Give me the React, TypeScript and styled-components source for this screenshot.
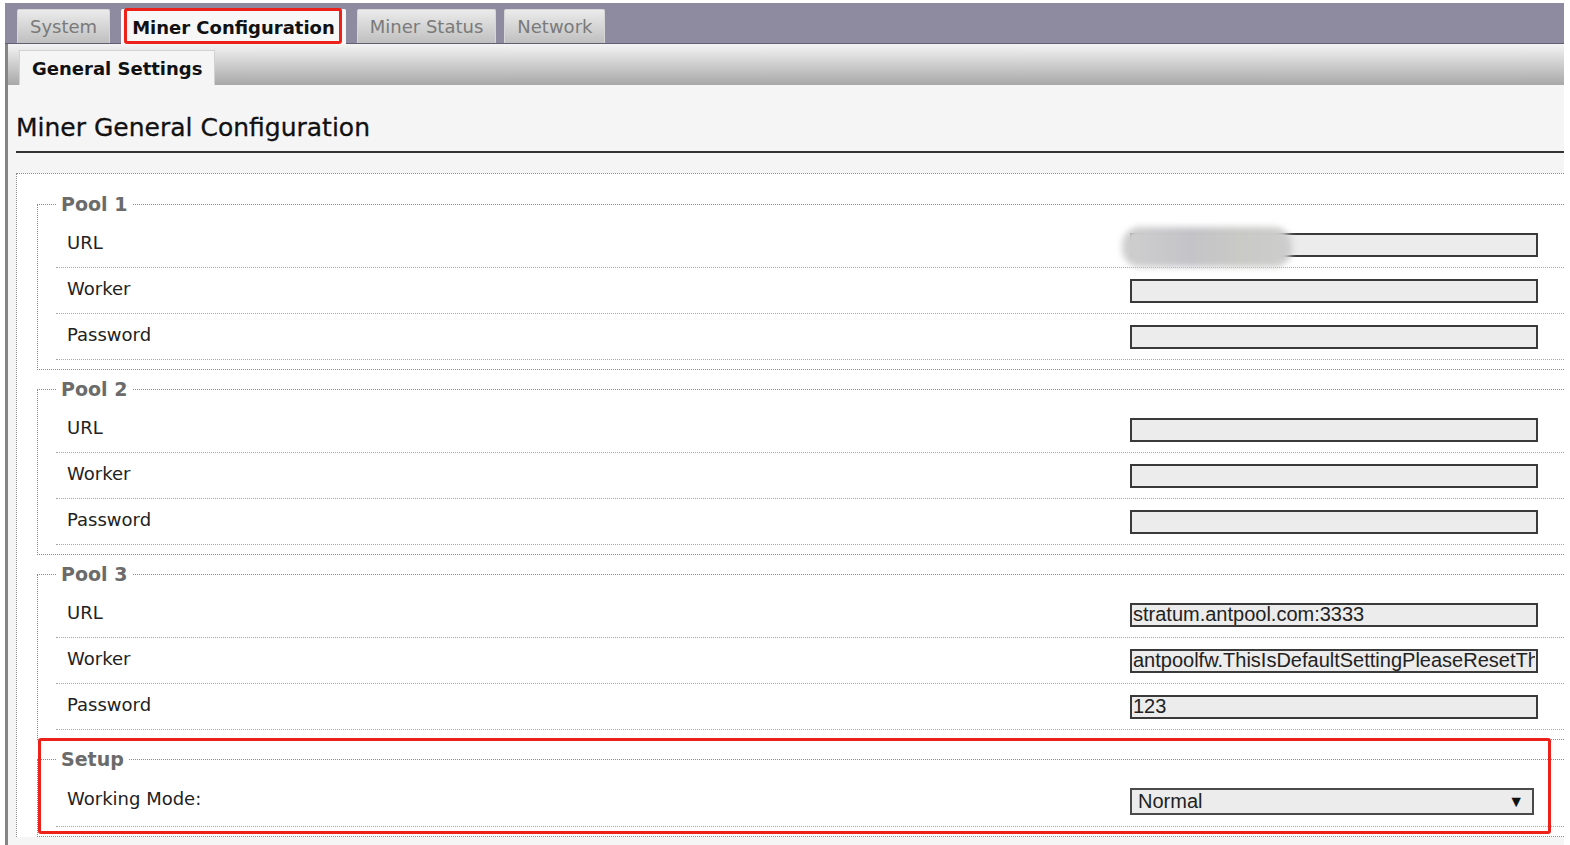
import React from "react";
import styled, { createGlobalStyle } from "styled-components";

const GlobalStyle = createGlobalStyle`
  html, body {
    margin: 0;
    padding: 0;
    background: #ffffff;
  }
  body {
    font-family: "DejaVu Sans", Verdana, sans-serif;
  }
`;

const Page = styled.div`
  width: 1559px;
  height: 842px;
  margin: 3px 0 0 5px;
  display: flex;
  flex-direction: column;
  overflow: hidden;
`;

const TopNav = styled.div`
  display: flex;
  align-items: flex-end;
  height: 41px;
  padding-left: 12px;
  background: #8e8a9f;
  box-shadow: inset 0 -1px 0 #625d72;
`;

const NavTab = styled.div<{ $active?: boolean }>`
  position: relative;
  display: flex;
  align-items: center;
  height: ${(p) => (p.$active ? "34px" : "33px")};
  margin: ${(p) => (p.$active ? "0 11px 0 3px" : "0 8px 1px 0")};
  padding: 0 ${(p) => (p.$active ? "10px" : "12px")};
  border: 1px solid ${(p) => (p.$active ? "#f6f6f6" : "#d6d6d6")};
  border-bottom: none;
  border-radius: 2px 2px 0 0;
  background: ${(p) =>
    p.$active ? "#f7f7f7" : "linear-gradient(#ebebeb, #bfbfbf)"};
  color: ${(p) => (p.$active ? "#111111" : "#7a7a7a")};
  font-size: 18px;
  font-weight: ${(p) => (p.$active ? "bold" : "normal")};
  white-space: nowrap;

  ${(p) =>
    p.$active &&
    `
    &::after {
      content: "";
      position: absolute;
      top: -2px;
      left: 2px;
      right: 3px;
      bottom: 0;
      border: 3px solid #ec2119;
      border-radius: 3px;
    }
  `}
`;

const Body = styled.div`
  flex: 1;
  display: flex;
  flex-direction: column;
  border-left: 3px solid #858585;
`;

const SubNav = styled.div`
  display: flex;
  align-items: flex-end;
  height: 41px;
  padding-left: 11px;
  background: linear-gradient(#f4f4f4, #a8a8a8);
`;

const SubTab = styled.div`
  display: flex;
  align-items: center;
  height: 34px;
  padding: 0 12px;
  border: 1px solid #d2d2d2;
  border-bottom: none;
  background: #f5f5f5;
  color: #111111;
  font-size: 18px;
  font-weight: bold;
`;

const Panel = styled.div`
  flex: 1;
  padding-left: 8px;
  background: #f5f5f5;
`;

const Title = styled.h2`
  margin: 28px 0 0;
  padding-bottom: 8px;
  border-bottom: 2px solid #333333;
  font-size: 25px;
  line-height: 30px;
  font-weight: normal;
  color: #111111;
  -webkit-text-stroke: 0.3px #111111;
`;

const ConfigBox = styled.div`
  margin-top: 20px;
  padding: 19px 0 0 20px;
  border: 1px dotted #8a8a8a;
  border-right: none;
  border-bottom: none;
  background: #ffffff;
`;

const Group = styled.fieldset`
  margin: 0 0 8px;
  padding: 7px 0 9px 18px;
  border: 1px dotted #8a8a8a;
  border-right: none;
  min-width: 0;
`;

const GroupTitle = styled.legend`
  padding: 0 5px;
  font-size: 19px;
  line-height: 22px;
  font-weight: bold;
  color: #6b6b6b;
`;

const Highlight = styled.div`
  position: relative;

  &::after {
    content: "";
    position: absolute;
    top: -10px;
    left: 1px;
    right: 13px;
    bottom: 3px;
    border: 3px solid #ec2119;
    border-radius: 3px;
    pointer-events: none;
  }
`;

const Row = styled.div<{ $tall?: boolean }>`
  display: flex;
  align-items: center;
  justify-content: space-between;
  height: ${(p) => (p.$tall ? "49px" : "45px")};
  padding: 0 26px 0 11px;
  border-bottom: 1px dotted #a8a8a8;
`;

const Label = styled.span<{ $shift?: boolean }>`
  font-size: 18px;
  color: #222222;
  margin-bottom: ${(p) => (p.$shift ? "6px" : "4px")};
`;

const FieldWrap = styled.div`
  position: relative;
  display: flex;
`;

const TextField = styled.input`
  box-sizing: border-box;
  width: 408px;
  height: 24px;
  padding: 0 1px;
  border: 2px solid #3a3a3a;
  background: #ececec;
  color: #222222;
  font-family: "Liberation Sans", Arial, sans-serif;
  font-size: 20px;
  outline: none;
`;

const Smudge = styled.span`
  position: absolute;
  top: -6px;
  left: -8px;
  width: 170px;
  height: 40px;
  border-radius: 18px;
  background: linear-gradient(90deg, #cfcfcf, #c4c4c8 40%, #c9c9c6 70%, #cdcdcd);
  filter: blur(3px);
`;

const Picker = styled.div`
  box-sizing: border-box;
  display: flex;
  align-items: center;
  justify-content: space-between;
  width: 404px;
  height: 27px;
  margin-right: 4px;
  padding: 0 8px 0 6px;
  border: 2px solid #4a4a4a;
  background: #ececec;
  color: #222222;
  font-family: "Liberation Sans", Arial, sans-serif;
  font-size: 20px;
`;

const Caret = styled.span`
  font-size: 16px;
  color: #111111;
`;

type Pool = { name: string; url: string; worker: string; password: string; hidden?: boolean };

const pools: Pool[] = [
  { name: "Pool 1", url: "", worker: "", password: "", hidden: true },
  { name: "Pool 2", url: "", worker: "", password: "" },
  {
    name: "Pool 3",
    url: "stratum.antpool.com:3333",
    worker: "antpoolfw.ThisIsDefaultSettingPleaseResetTheWorkerName",
    password: "123",
  },
];

export default function App() {
  return (
    <>
      <GlobalStyle />
      <Page>
        <TopNav>
          <NavTab>{"System"}</NavTab>
          <NavTab $active>{"Miner Configuration"}</NavTab>
          <NavTab>{"Miner Status"}</NavTab>
          <NavTab>{"Network"}</NavTab>
        </TopNav>
        <Body>
          <SubNav>
            <SubTab>{"General Settings"}</SubTab>
          </SubNav>
          <Panel>
            <Title>{"Miner General Configuration"}</Title>
            <ConfigBox>
              {pools.map((pool) => (
                <Group key={pool.name}>
                  <GroupTitle>{pool.name}</GroupTitle>
                  <Row>
                    <Label>{"URL"}</Label>
                    <FieldWrap>
                      <TextField defaultValue={pool.url} readOnly />
                      {pool.hidden && <Smudge />}
                    </FieldWrap>
                  </Row>
                  <Row>
                    <Label>{"Worker"}</Label>
                    <TextField defaultValue={pool.worker} readOnly />
                  </Row>
                  <Row>
                    <Label>{"Password"}</Label>
                    <TextField defaultValue={pool.password} readOnly />
                  </Row>
                </Group>
              ))}
              <Highlight>
                <Group>
                  <GroupTitle>{"Setup"}</GroupTitle>
                  <Row $tall>
                    <Label $shift>{"Working Mode:"}</Label>
                    <Picker>
                      {"Normal"}
                      <Caret>{"▼"}</Caret>
                    </Picker>
                  </Row>
                </Group>
              </Highlight>
            </ConfigBox>
          </Panel>
        </Body>
      </Page>
    </>
  );
}
